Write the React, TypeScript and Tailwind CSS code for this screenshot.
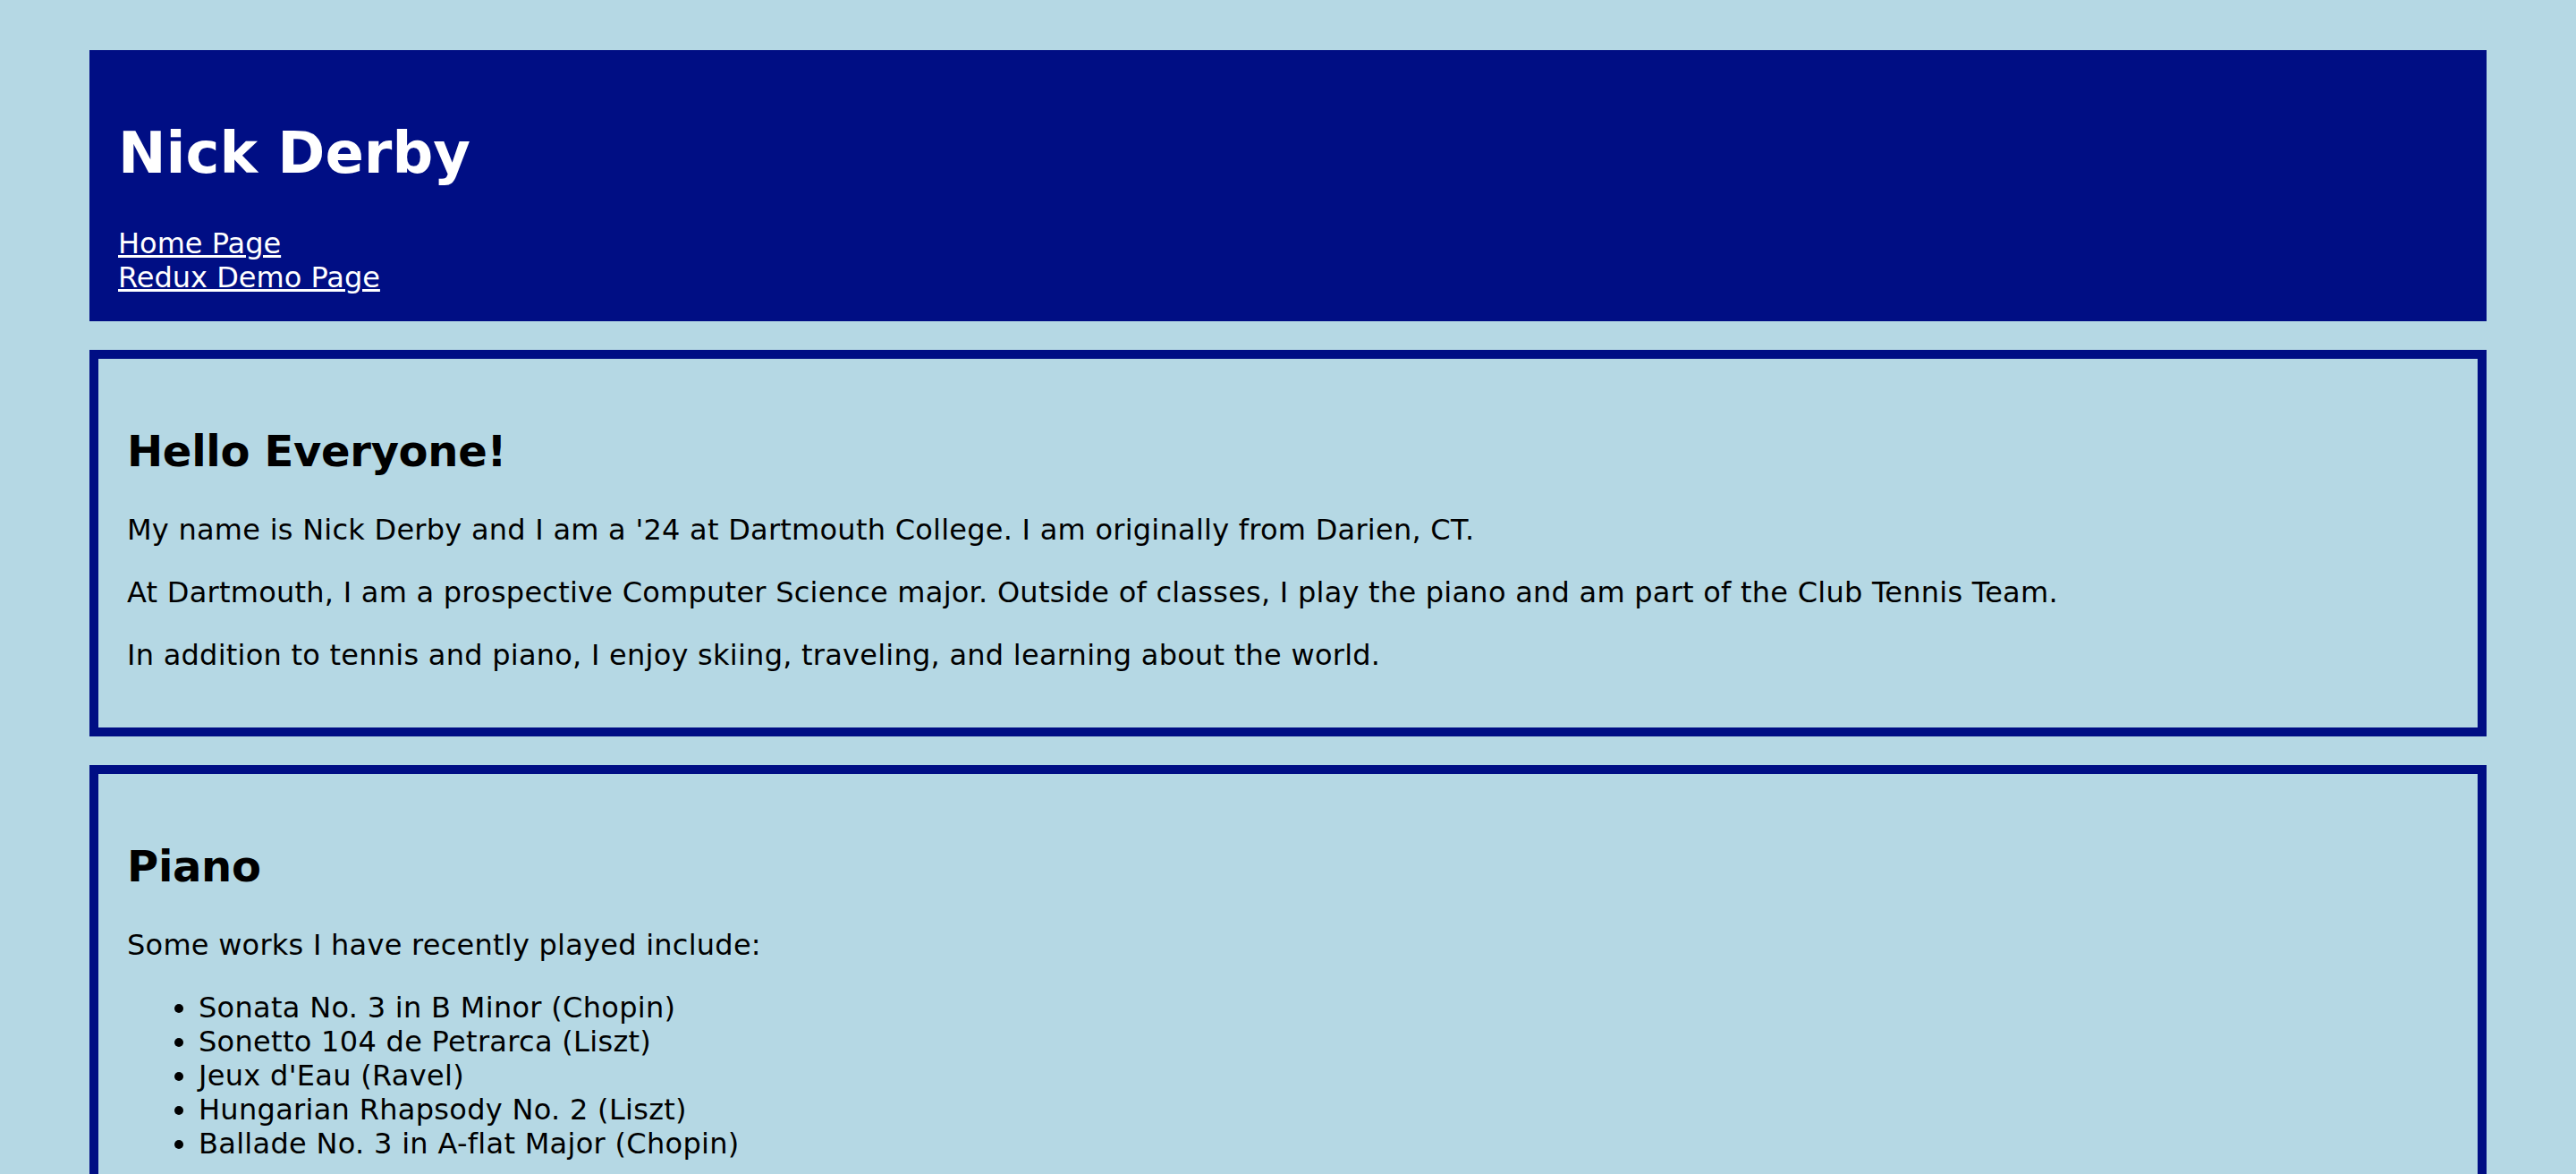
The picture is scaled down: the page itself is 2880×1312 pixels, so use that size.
const works = [
  'Sonata No. 3 in B Minor (Chopin)',
  'Sonetto 104 de Petrarca (Liszt)',
  "Jeux d'Eau (Ravel)",
  'Hungarian Rhapsody No. 2 (Liszt)',
  'Ballade No. 3 in A-flat Major (Chopin)',
];

function Header() {
  return (
    <header className="bg-[#000e84] px-8 pt-[34px] pb-[30px] text-white">
      <h1 className="my-[43px] text-[64px] font-bold leading-[77px]">Nick Derby</h1>
      <nav className="flex flex-col items-start">
        <a href="#" className="underline">
          Home Page
        </a>
        <a href="#" className="underline">
          Redux Demo Page
        </a>
      </nav>
    </header>
  );
}

function Card({ children }: { children: React.ReactNode }) {
  return (
    <section className="mt-8 border-[10px] border-[#000e84] px-8 pt-[34px] pb-[30px]">{children}</section>
  );
}

export default function App() {
  return (
    <div className="h-screen overflow-hidden bg-[#b5d8e4] px-[100px] pt-[56px] font-['DejaVu_Sans',Verdana,sans-serif] text-[32px] leading-[38px] text-black">
      <Header />

      {/* About */}
      <Card>
        <h2 className="my-[40px] text-[48px] font-bold leading-[58px] tracking-[-0.3px]">Hello Everyone!</h2>
        <p className="my-8 tracking-[0.25px]">
          My name is Nick Derby and I am a '24 at Dartmouth College. I am originally from Darien, CT.
        </p>
        <p className="my-8 tracking-[0.25px]">
          At Dartmouth, I am a prospective Computer Science major. Outside of classes, I play the piano and
          am part of the Club Tennis Team.
        </p>
        <p className="my-8 tracking-[0.25px]">
          In addition to tennis and piano, I enjoy skiing, traveling, and learning about the world.
        </p>
      </Card>

      {/* Piano */}
      <Card>
        <h2 className="my-[40px] text-[48px] font-bold leading-[58px] tracking-[-0.3px]">Piano</h2>
        <p className="my-8 tracking-[0.25px]">Some works I have recently played include:</p>
        <ul className="my-8 list-disc pl-[80px] tracking-[0.3px]">
          {works.map(w => (
            <li key={w}>{w}</li>
          ))}
        </ul>
      </Card>
    </div>
  );
}
